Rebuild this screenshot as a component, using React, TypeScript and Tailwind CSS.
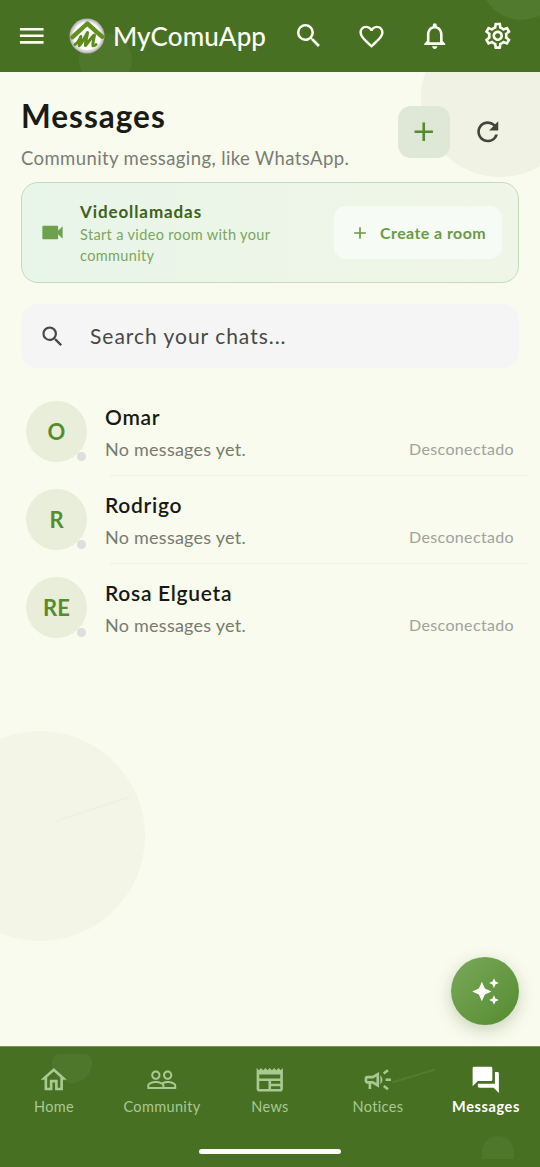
import {
  MdAdd,
  MdAutoAwesome,
  MdFavoriteBorder,
  MdForum,
  MdMenu,
  MdNotificationsNone,
  MdOutlineCampaign,
  MdOutlineHome,
  MdOutlineNewspaper,
  MdOutlineSettings,
  MdPeopleOutline,
  MdRefresh,
  MdSearch,
  MdVideocam,
} from 'react-icons/md'

const chats = [
  { name: 'Omar', initials: 'O' },
  { name: 'Rodrigo', initials: 'R' },
  { name: 'Rosa Elgueta', initials: 'RE' },
]

const tabs = [
  { label: 'Home', icon: MdOutlineHome },
  { label: 'Community', icon: MdPeopleOutline },
  { label: 'News', icon: MdOutlineNewspaper },
  { label: 'Notices', icon: MdOutlineCampaign },
]

function Logo() {
  return (
    <svg viewBox="0 0 36 36" className="size-9">
      <defs>
        <radialGradient id="logo">
          <stop offset="0.75" stopColor="#ffffff" />
          <stop offset="1" stopColor="#a9aba6" />
        </radialGradient>
      </defs>
      <circle cx="18" cy="18" r="17.5" fill="url(#logo)" />
      <path d="M3.5 19.2 18.3 5.5l14.7 13.2" fill="none" stroke="#64901f" strokeWidth="4.4" strokeLinejoin="round" strokeLinecap="round" />
      <path
        d="M6 26.5c2.5-1.500 4.500-5 5.800-8-.3 3.500-2 6.500-1.600 9.300 3-3.500 6-9 8.300-13.300-.2 4.500-2.500 9-2 13 3-3.500 5.500-8 9-10.500-.3 3.800-2.300 7.500-1.500 10.800 1.300.3 2-.3 3-1.300"
        fill="none"
        stroke="#5d8a1c"
        strokeWidth="3"
        strokeLinecap="round"
        strokeLinejoin="round"
      />
    </svg>
  )
}

function Header() {
  return (
    <header className="relative flex h-[72px] shrink-0 items-center overflow-hidden bg-[#487023] pr-[11px] text-[#fdfff5]">
      <div className="absolute top-[33px] left-[79px] size-[53px] rounded-full bg-[#4f772c]" />
      <div className="absolute -top-[60px] left-[481px] size-[80px] rounded-full bg-[#527a2f]" />
      <button className="relative flex h-full w-[63px] items-center justify-center">
        <MdMenu size={31.5} />
      </button>
      <div className="relative ml-[6px] flex flex-1 items-center">
        <Logo />
        <span className="ml-2 text-[26px] leading-8 font-medium tracking-[0.1px]">MyComuApp</span>
      </div>
      <div className="relative flex items-center">
        <button className="flex w-[63px] justify-center"><MdSearch size={31.5} /></button>
        <button className="flex w-[63px] justify-center"><MdFavoriteBorder size={29} /></button>
        <button className="flex w-[63px] justify-center"><MdNotificationsNone size={31.5} /></button>
        <button className="flex w-[63px] justify-center"><MdOutlineSettings size={31.5} /></button>
      </div>
    </header>
  )
}

function VideoCard() {
  return (
    <section className="flex h-[101px] items-center rounded-[17px] border border-[#c3dbbd] bg-linear-to-r from-[#e8f5e9] to-[#f0f6e7] pr-4 pl-[17px]">
      <MdVideocam size={27} className="text-[#6fa04d]" />
      <div className="ml-[14px] flex-1 pt-[2px]">
        <h2 className="text-[17px] leading-[22px] font-bold tracking-[0.9px] text-[#3d621b]">Videollamadas</h2>
        <p className="w-[210px] pt-px text-[14.5px] leading-[21px] tracking-[0.35px] text-[#7ba55d]">
          Start a video room with your community
        </p>
      </div>
      <button className="flex h-[53px] w-[168px] items-center rounded-[12px] bg-[#f7fbf5] pl-[16px] text-[#699b47]">
        <MdAdd size={20} />
        <span className="ml-[10px] text-[16px] font-bold tracking-[0.42px] whitespace-nowrap">Create a room</span>
      </button>
    </section>
  )
}

function ChatRow({ name, initials, last }: { name: string; initials: string; last: boolean }) {
  return (
    <li className="relative flex h-[88px] items-center pr-[26px] pl-[26px]">
      <div className="relative mb-px size-[61px] shrink-0">
        <div className="flex size-full items-center justify-center rounded-full bg-[#e8eeda] text-[22px] font-bold text-[#588b2b]">
          {initials}
        </div>
        <span className="absolute right-px bottom-px size-[9px] rounded-full bg-[#dddedd]" />
      </div>
      <div className="ml-[18px] flex-1 pt-[2px]">
        <h3 className="text-[21px] leading-[32px] font-semibold tracking-[0.7px] text-[#171a12]">{name}</h3>
        <div className="flex items-center justify-between">
          <p className="text-[18px] leading-[32px] tracking-[0.25px] text-[#777a71]">No messages yet.</p>
          <span className="text-[16px] tracking-[0.35px] text-[#a0a39a]">Desconectado</span>
        </div>
      </div>
      {!last && <div className="absolute right-[11px] bottom-0 left-[110px] h-px bg-[#f0f2e8]" />}
    </li>
  )
}

function BottomNav() {
  return (
    <nav className="relative flex h-[121px] shrink-0 flex-col items-center overflow-hidden border-t border-[#78965a] bg-[#487023]">
      <div className="absolute top-[7px] left-[52px] h-[29px] w-[40px] rounded-t-[8px] rounded-b-[20px] bg-[#4f772c]" />
      <div className="absolute top-[89px] left-[482px] h-[23px] w-[32px] rounded-t-full bg-[#4f772c]" />
      <div className="absolute top-[28px] left-[391px] h-[2px] w-[45px] -rotate-17 bg-[#547b31]" />
      <div className="relative flex w-full pt-[17px]">
        {tabs.map(({ label, icon: Icon }) => (
          <button key={label} className="flex w-[108px] flex-col items-center text-[#a9c993]">
            <Icon size={31.5} />
            <span className="mt-[1.5px] text-[14.5px] leading-[20px] tracking-[0.35px]">{label}</span>
          </button>
        ))}
        <button className="flex w-[108px] flex-col items-center text-white">
          <MdForum size={31.5} />
          <span className="mt-[1.5px] text-[14.5px] leading-[20px] font-bold tracking-[0.6px]">Messages</span>
        </button>
      </div>
      <div className="mt-auto mb-[13px] h-[5px] w-[142px] rounded-full bg-[#fcfdf8]" />
    </nav>
  )
}

export default function App() {
  return (
    <div className="flex h-[1167px] w-[540px] flex-col overflow-hidden bg-[#f9fbee] font-['Lato',sans-serif]">
      <Header />
      <main className="relative flex-1 overflow-hidden">
        <div className="absolute -top-[53px] left-[421px] size-[158px] rounded-full bg-[#f0f3e4]" />
        <div className="absolute top-[659px] -left-[65px] size-[210px] rounded-full bg-[#f3f5e7]" />
        <div className="absolute top-[736px] left-[54px] h-[2px] w-[78px] -rotate-18 bg-[#eff2e3]" />

        <div className="relative px-[21px] pt-[25px]">
          <div className="flex h-[85px]">
            <div className="flex-1">
              <h1 className="text-[31.5px] leading-[38px] font-bold tracking-[1px] text-[#1a1c14]">Messages</h1>
              <p className="mt-[8px] text-[18.5px] leading-[30px] tracking-[0.4px] text-[#7a7d74]">
                Community messaging, like WhatsApp.
              </p>
            </div>
            <div className="mt-[9px] mr-[5px] flex h-[52px] gap-[12px]">
              <button className="flex size-[52px] items-center justify-center rounded-[13px] bg-[#dfe8d7] text-[#558b2f]">
                <MdAdd size={31.5} />
              </button>
              <button className="flex size-[52px] items-center justify-center text-[#42453c]">
                <MdRefresh size={31.5} />
              </button>
            </div>
          </div>
          <VideoCard />
          <div className="mt-[21px] flex h-[64px] items-center rounded-[16px] bg-[#f5f5f5] pl-[18px] text-[#474946]">
            <MdSearch size={27} />
            <span className="ml-[24px] text-[21px] tracking-[0.98px]">Search your chats...</span>
          </div>
        </div>

        <ul className="relative mt-[20px]">
          {chats.map((chat, i) => (
            <ChatRow key={chat.name} {...chat} last={i === chats.length - 1} />
          ))}
        </ul>

        <button className="absolute right-[21px] bottom-[21px] flex size-[68px] items-center justify-center rounded-full bg-linear-to-br from-[#7aa95a] to-[#558b2f] text-white shadow-[0_5px_16px_rgba(60,90,30,0.25)]">
          <MdAutoAwesome size={29} />
        </button>
      </main>
      <BottomNav />
    </div>
  )
}
